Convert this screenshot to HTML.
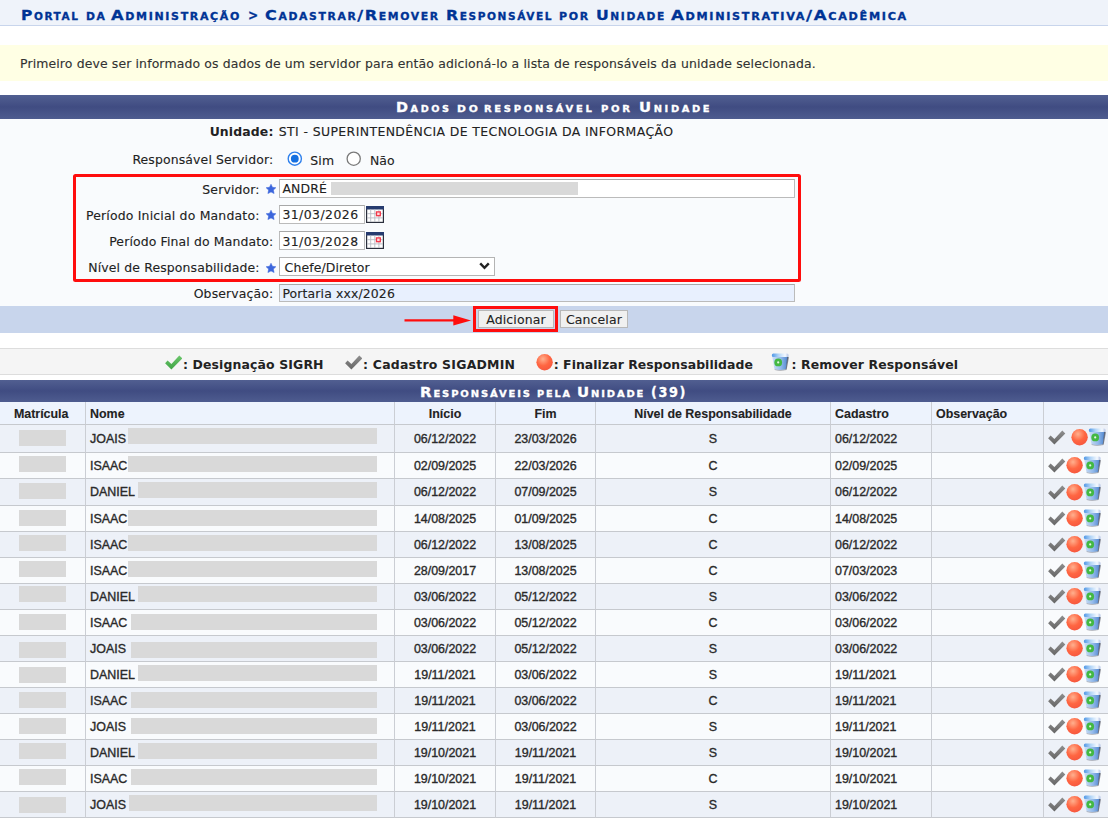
<!DOCTYPE html>
<html lang="pt-BR">
<head>
<meta charset="utf-8">
<title>Cadastrar/Remover Responsável por Unidade</title>
<style>
html,body{margin:0;padding:0;background:#fff;}
body{width:1108px;height:818px;position:relative;overflow:hidden;font-family:"DejaVu Sans","Liberation Sans",sans-serif;font-size:12.45px;letter-spacing:0.13px;color:#222;-webkit-text-stroke:0.12px #222;}
.abs{position:absolute;}
.a{font-family:"Liberation Sans",sans-serif;letter-spacing:0;}
#hdr{left:0;top:0;width:1108px;height:25px;background:#eff3fa;border-bottom:1px solid #c8d5ec;}
.w{position:absolute;white-space:nowrap;transform-origin:0 50%;font-weight:bold;font-variant:small-caps;}
.hw{top:5.8px;color:#003395;font-size:14.8px;letter-spacing:1.5px;line-height:18px;-webkit-text-stroke:0.3px #003395;}
.b1,.b2{color:#fff;font-size:13.5px;letter-spacing:2.4px;line-height:16px;-webkit-text-stroke:0.3px #fff;}
.b2{letter-spacing:1.7px;}
.b1{top:4.3px;}
.b2{top:3.6px;}
#msg{left:0;top:44.6px;width:1108px;height:36.9px;background:#ffffe4;}
#msg span{position:absolute;left:20px;top:11.9px;white-space:nowrap;color:#333;line-height:16px;}
.bar{left:0;width:1108px;background:linear-gradient(#515f91 0%,#404c82 50%,#4e5c8f 100%);}
#bar1{top:94.6px;height:24px;}
#bar2{top:380.4px;height:21.6px;}
#form{left:0;top:118.6px;width:1108px;height:188px;background:#f9fbfd;}
.lbl{position:absolute;white-space:nowrap;line-height:16px;color:#222;}
.r{text-align:right;}
.inp{position:absolute;box-sizing:border-box;border:1px solid #bbb;border-top-color:#a8a8a8;background:#fff;white-space:nowrap;overflow:hidden;color:#222;line-height:16px;padding:1.4px 0 0 2.8px;}
.star{position:absolute;width:10px;height:10px;margin:-0.5px 0 0 -0.5px;overflow:visible;}
.cal{position:absolute;width:18px;height:17px;}
#strip{left:0;top:306px;width:1108px;height:26.5px;background:#c8d5ec;}
.btn{position:absolute;box-sizing:border-box;border:1px solid #b8b8b8;background:#f0f0f0;padding-top:0.9px;text-align:center;color:#222;white-space:nowrap;line-height:16px;}
#legend{left:0;top:348px;width:1108px;height:26.5px;background:#f5f5f5;border-top:1px solid #ddd;border-bottom:1px solid #ddd;box-sizing:border-box;}
#legend span{-webkit-text-stroke:0;position:absolute;font-weight:bold;white-space:nowrap;color:#222;top:7.5px;line-height:16px;}
.red{position:absolute;box-sizing:border-box;border:3.5px solid #ff0d0d;}
#tb{left:0;top:402px;width:1108px;border-collapse:separate;border-spacing:0;table-layout:fixed;font-size:12.45px;color:#2a2a2a;-webkit-text-stroke:0.35px #2a2a2a;}
#tb th,#tb td{box-sizing:border-box;border-right:1px solid #cbced4;border-bottom:1px solid #c6c9ce;padding:0 0 0 4px;text-align:left;white-space:nowrap;position:relative;overflow:hidden;vertical-align:middle;}
#tb th{height:23px;background:#edf3fd;font-weight:bold;color:#222;-webkit-text-stroke:0.1px #222;padding-top:2.6px;}
#tb .c{text-align:center;padding:0;}
#tb th.c{padding:2.6px 0 0 0;}
#tb th:first-child{padding-right:2.6px;}
#tb .l{border-right:0;padding:0;}
#tb tr.o td{background:#edf1f8;}
#tb tr.e td{background:#f9fbfd;}
#tb i.m{display:inline-block;width:47px;height:16px;background:#d9d9d9;vertical-align:middle;position:relative;top:0px;left:-0.5px;}
#tb i.n{position:absolute;top:50%;height:16px;right:17px;background:#d9d9d9;}
.ic{overflow:visible;position:absolute;width:18px;height:18px;top:50%;margin-top:-9.3px;}
.ic.k{left:3px;}
.ic.b{left:22px;}
.ic.t{left:39px;}
tr.f .ic.b{left:26.5px;}
tr.f .ic.t{left:43.5px;}
tr.f .ic{margin-top:-11px;}
</style>
</head>
<body>
<svg width="0" height="0" style="position:absolute">
<defs>
<linearGradient id="gk" x1="0" y1="0" x2="0" y2="1"><stop offset="0" stop-color="#8e8e8e"/><stop offset="1" stop-color="#666"/></linearGradient>
<linearGradient id="gg" x1="0" y1="0" x2="0" y2="1"><stop offset="0" stop-color="#6cc66c"/><stop offset="1" stop-color="#3fa545"/></linearGradient>
<radialGradient id="gb" cx="0.4" cy="0.3" r="0.75"><stop offset="0" stop-color="#ffb08e"/><stop offset="0.55" stop-color="#ff6642"/><stop offset="1" stop-color="#f5563e"/></radialGradient>
<linearGradient id="gt" x1="0" y1="0" x2="1" y2="0"><stop offset="0" stop-color="#cfe0f6"/><stop offset="0.55" stop-color="#92b9ea"/><stop offset="1" stop-color="#4c84ce"/></linearGradient>
<linearGradient id="gr" x1="0" y1="0" x2="1" y2="0"><stop offset="0" stop-color="#4f97e6"/><stop offset="0.4" stop-color="#b0d4f7"/><stop offset="0.8" stop-color="#f4f9ff"/><stop offset="1" stop-color="#b4c2e4"/></linearGradient>
<symbol id="ck" viewBox="0 0 18 18" overflow="visible"><path d="M1.1 10.3 L3.6 7.6 L7.4 11 L15.3 2.6 L18.3 5.4 L7.4 16.4 Z" fill="url(#gk)"/></symbol>
<symbol id="ckg" viewBox="0 0 18 18" overflow="visible"><path d="M1.1 10.3 L3.6 7.6 L7.4 11 L15.3 2.6 L18.3 5.4 L7.4 16.4 Z" fill="url(#gg)"/></symbol>
<symbol id="ball" viewBox="0 0 18 18"><circle cx="8.6" cy="9.3" r="8.2" fill="url(#gb)"/></symbol>
<symbol id="trash" viewBox="0 0 18 18" overflow="visible"><path d="M1.1 3 L17.2 3 L15 16.3 Q9 17.9 3.5 16.3 Z" fill="url(#gt)"/><path d="M16.2 3.6 L17.9 4.2 L15.7 16.5 L14.7 16.8 Z" fill="#4a4f5c" opacity=".7"/><path d="M3.5 16.3 Q9 17.9 15 16.3 L15.5 17 Q9 18.6 3.8 17.1 Z" fill="#5d6270" opacity=".55"/><rect x="0.9" y="0.5" width="16.6" height="3.4" rx="1.5" fill="url(#gr)"/><circle cx="7.2" cy="9.4" r="3.9" fill="#43b843"/><circle cx="7.2" cy="9.4" r="1.1" fill="#e4f6e4"/></symbol>
<symbol id="star" viewBox="0 0 10 10"><path d="M5 0.2 L6.5 3.3 L9.9 3.7 L7.4 6.1 L8.1 9.6 L5 7.9 L1.9 9.6 L2.6 6.1 L0.1 3.7 L3.5 3.3 Z" fill="#3c66dc" stroke="#3c66dc" stroke-width="0.5" stroke-linejoin="round"/></symbol>
<symbol id="cal" viewBox="0 0 18 17"><rect x="0.6" y="0.6" width="16.8" height="15.8" fill="#fff" stroke="#2b2f3c" stroke-width="1.2"/><rect x="0" y="0" width="18" height="3.5" fill="#263b6f"/><path d="M4.7 3.5 V16 M8.8 3.5 V16 M12.9 3.5 V16 M1 7.7 H17 M1 11.9 H17" stroke="#b9bcc4" stroke-width="0.9" fill="none"/><rect x="10.5" y="5.9" width="3.8" height="3.8" fill="#ffd9dc" stroke="#f23648" stroke-width="1.3"/></symbol>
</defs>
</svg>
<div id="hdr" class="abs"><span class="w hw" id="hw0" style="left:21.3px;transform:scaleX(1.0485)">Portal</span> <span class="w hw" id="hw1" style="left:86.4px;transform:scaleX(1.0771)">da</span> <span class="w hw" id="hw2" style="left:111.4px;transform:scaleX(1.1016)">Administração</span> <span class="w hw" id="hw3" style="left:247.8px;transform:scaleX(0.8222)">&gt;</span> <span class="w hw" id="hw4" style="left:265.2px;transform:scaleX(1.0826)">Cadastrar/Remover</span> <span class="w hw" id="hw5" style="left:445.7px;transform:scaleX(1.0577)">Responsável</span> <span class="w hw" id="hw6" style="left:558.9px;transform:scaleX(1.0968)">por</span> <span class="w hw" id="hw7" style="left:595.5px;transform:scaleX(1.0625)">Unidade</span> <span class="w hw" id="hw8" style="left:671.3px;transform:scaleX(1.1208)">Administrativa/Acadêmica</span></div>
<div id="msg" class="abs"><span>Primeiro deve ser informado os dados de um servidor para então adicioná-lo a lista de responsáveis da unidade selecionada.</span></div>
<div id="bar1" class="abs bar"><span class="w b1" id="b10" style="left:396.1px;transform:scaleX(1.0733)">Dados</span> <span class="w b1" id="b11" style="left:456.7px;transform:scaleX(1.1871)">do</span> <span class="w b1" id="b12" style="left:484.4px;transform:scaleX(1.1109)">responsável</span> <span class="w b1" id="b13" style="left:601.4px;transform:scaleX(1.1196)">por</span> <span class="w b1" id="b14" style="left:639.0px;transform:scaleX(1.0979)">Unidade</span></div>
<div id="form" class="abs"></div>
<!-- form rows (absolute in page coords) -->
<div class="lbl r" style="left:60px;width:213.5px;top:123.5px;font-weight:bold;-webkit-text-stroke:0">Unidade:</div>
<div class="lbl" style="left:278.7px;top:123.5px;letter-spacing:0.4px">STI - SUPERINTENDÊNCIA DE TECNOLOGIA DA INFORMAÇÃO</div>
<div class="lbl r" style="left:60px;width:213.3px;top:152.1px">Responsável Servidor:</div>
<svg class="abs" style="left:287px;top:151px" width="16" height="16" viewBox="0 0 16 16"><circle cx="7.8" cy="7.7" r="6.6" fill="#fff" stroke="#2f80ec" stroke-width="1.4"/><circle cx="7.8" cy="7.7" r="3.9" fill="#1670e0"/></svg>
<div class="lbl" style="left:310.3px;top:153.4px">Sim</div>
<svg class="abs" style="left:346px;top:151px" width="16" height="16" viewBox="0 0 16 16"><circle cx="7.7" cy="7.7" r="6.6" fill="#fff" stroke="#7a7a7a" stroke-width="1.3"/></svg>
<div class="lbl" style="left:369.9px;top:153.4px">Não</div>

<div class="red" style="left:72.8px;top:173.8px;width:728.1px;height:108.5px;border-width:3.6px;border-radius:2.5px"></div>

<div class="lbl r" style="left:60px;width:199.6px;top:181.6px">Servidor:</div>
<svg class="star" style="left:266px;top:184.5px"><use href="#star"/></svg>
<div class="inp" style="left:278.6px;top:179px;width:516.4px;height:18.5px">ANDRÉ<i style="position:absolute;left:51.5px;top:2px;width:247px;height:13px;background:#d9d9d9"></i></div>

<div class="lbl r" style="left:60px;width:199.6px;top:207.6px;letter-spacing:0.19px">Período Inicial do Mandato:</div>
<svg class="star" style="left:266px;top:210.5px"><use href="#star"/></svg>
<div class="inp" style="left:278.6px;top:205px;width:86px;height:18.5px;letter-spacing:0.45px">31/03/2026</div>
<svg class="cal" style="left:366px;top:206px"><use href="#cal"/></svg>

<div class="lbl r" style="left:60px;width:213.3px;top:233.8px">Período Final do Mandato:</div>
<div class="inp" style="left:278.6px;top:231.3px;width:86px;height:18.5px;letter-spacing:0.45px">31/03/2028</div>
<svg class="cal" style="left:366px;top:232px"><use href="#cal"/></svg>

<div class="lbl r" style="left:60px;width:199.6px;top:260px">Nível de Responsabilidade:</div>
<svg class="star" style="left:266px;top:263px"><use href="#star"/></svg>
<div class="inp" style="left:278.6px;top:257.3px;width:216.2px;height:18.8px;padding-left:5px;border-color:#b4b4b4">Chefe/Diretor<svg style="position:absolute;right:3.5px;top:4px" width="11" height="8" viewBox="0 0 11 8"><path d="M1.2 1.3 L5.5 5.8 L9.8 1.3" fill="none" stroke="#222" stroke-width="2.4"/></svg></div>

<div class="lbl r" style="left:60px;width:213.3px;top:285.8px">Observação:</div>
<div class="inp" style="left:278.6px;top:283.6px;width:516.4px;height:18.6px;background:#e8f0fe">Portaria xxx/2026</div>

<div id="strip" class="abs"></div>
<svg class="abs" style="left:400px;top:312px" width="75" height="17" viewBox="0 0 75 17"><path d="M4.5 8.4 H56" stroke="#ff0d0d" stroke-width="2.2" fill="none"/><path d="M53.3 3.2 L71 8.4 L53.3 13.6 Z" fill="#ff0d0d"/></svg>
<div class="red" style="left:473px;top:306.3px;width:84.8px;height:25.6px;border-width:3.3px"></div>
<div class="btn" style="left:478px;top:310.3px;width:76px;height:18px">Adicionar</div>
<div class="btn" style="left:560px;top:310.3px;width:68px;height:18px">Cancelar</div>

<div id="legend" class="abs">
<svg class="abs" style="left:163.8px;top:3.7px" width="18" height="18"><use href="#ckg"/></svg>
<span style="left:183px">: Designação SIGRH</span>
<svg class="abs" style="left:344px;top:3.7px" width="18" height="18"><use href="#ck"/></svg>
<span style="left:363px;letter-spacing:0.24px">: Cadastro SIGADMIN</span>
<svg class="abs" style="left:535.9px;top:3.8px" width="18" height="18"><use href="#ball"/></svg>
<span style="left:553.7px;letter-spacing:0.05px">: Finalizar Responsabilidade</span>
<svg class="abs" style="left:771.1px;top:4.2px" width="18" height="18"><use href="#trash"/></svg>
<span style="left:791.4px">: Remover Responsável</span>
</div>
<div id="bar2" class="abs bar"><span class="w b2" id="b20" style="left:420.4px;transform:scaleX(1.1078)">Responsáveis</span> <span class="w b2" id="b21" style="left:537.3px;transform:scaleX(1.0802)">pela</span> <span class="w b2" id="b22" style="left:577.2px;transform:scaleX(1.1046)">Unidade</span> <span class="w b2" id="b23" style="left:650.5px;transform:scaleX(0.9521)">(39)</span></div>

<table id="tb" class="abs a" cellspacing="0" cellpadding="0">
<colgroup><col style="width:86px"><col style="width:309px"><col style="width:101px"><col style="width:100px"><col style="width:235px"><col style="width:101px"><col style="width:112px"><col style="width:64px"></colgroup>
<tr class="th"><th class="c">Matrícula</th><th>Nome</th><th class="c">Início</th><th class="c">Fim</th><th class="c">Nível de Responsabilidade</th><th>Cadastro</th><th>Observação</th><th class="l"></th></tr>
<tr class="o f" style="height:28px"><td class="c"><i class="m" style="top:-0.6px"></i></td><td><span>JOAIS</span><i class="n" style="left:42.3px;margin-top:-10.2px"></i></td><td class="c">06/12/2022</td><td class="c">23/03/2026</td><td class="c">S</td><td>06/12/2022</td><td></td><td class="l"><svg class="ic k"><use href="#ck"/></svg><svg class="ic b"><use href="#ball"/></svg><svg class="ic t"><use href="#trash"/></svg></td></tr>
<tr class="e" style="height:26px"><td class="c"><i class="m" style="top:-1.7px"></i></td><td><span>ISAAC</span><i class="n" style="left:42.3px;margin-top:-9.7px"></i></td><td class="c">02/09/2025</td><td class="c">22/03/2026</td><td class="c">C</td><td>02/09/2025</td><td></td><td class="l"><svg class="ic k"><use href="#ck"/></svg><svg class="ic b"><use href="#ball"/></svg><svg class="ic t"><use href="#trash"/></svg></td></tr>
<tr class="o" style="height:27px"><td class="c"><i class="m" style="top:-0.6px"></i></td><td><span>DANIEL</span><i class="n" style="left:51.7px;margin-top:-10.4px"></i></td><td class="c">06/12/2022</td><td class="c">07/09/2025</td><td class="c">S</td><td>06/12/2022</td><td></td><td class="l"><svg class="ic k"><use href="#ck"/></svg><svg class="ic b"><use href="#ball"/></svg><svg class="ic t"><use href="#trash"/></svg></td></tr>
<tr class="e" style="height:26px"><td class="c"><i class="m" style="top:-1.0px"></i></td><td><span>ISAAC</span><i class="n" style="left:42.3px;margin-top:-9.0px"></i></td><td class="c">14/08/2025</td><td class="c">01/09/2025</td><td class="c">C</td><td>14/08/2025</td><td></td><td class="l"><svg class="ic k"><use href="#ck"/></svg><svg class="ic b"><use href="#ball"/></svg><svg class="ic t"><use href="#trash"/></svg></td></tr>
<tr class="o" style="height:26px"><td class="c"><i class="m" style="top:-1.4px"></i></td><td><span>ISAAC</span><i class="n" style="left:42.3px;margin-top:-9.3px"></i></td><td class="c">06/12/2022</td><td class="c">13/08/2025</td><td class="c">C</td><td>06/12/2022</td><td></td><td class="l"><svg class="ic k"><use href="#ck"/></svg><svg class="ic b"><use href="#ball"/></svg><svg class="ic t"><use href="#trash"/></svg></td></tr>
<tr class="e" style="height:26px"><td class="c"><i class="m" style="top:-1.7px"></i></td><td><span>ISAAC</span><i class="n" style="left:42.3px;margin-top:-9.7px"></i></td><td class="c">28/09/2017</td><td class="c">13/08/2025</td><td class="c">C</td><td>07/03/2023</td><td></td><td class="l"><svg class="ic k"><use href="#ck"/></svg><svg class="ic b"><use href="#ball"/></svg><svg class="ic t"><use href="#trash"/></svg></td></tr>
<tr class="o" style="height:26px"><td class="c"><i class="m" style="top:-2.4px"></i></td><td><span>DANIEL</span><i class="n" style="left:51.7px;margin-top:-10.4px"></i></td><td class="c">03/06/2022</td><td class="c">05/12/2022</td><td class="c">S</td><td>03/06/2022</td><td></td><td class="l"><svg class="ic k"><use href="#ck"/></svg><svg class="ic b"><use href="#ball"/></svg><svg class="ic t"><use href="#trash"/></svg></td></tr>
<tr class="e" style="height:26px"><td class="c"><i class="m" style="top:-0.9px"></i></td><td><span>ISAAC</span><i class="n" style="left:44.8px;margin-top:-8.9px"></i></td><td class="c">03/06/2022</td><td class="c">05/12/2022</td><td class="c">C</td><td>03/06/2022</td><td></td><td class="l"><svg class="ic k"><use href="#ck"/></svg><svg class="ic b"><use href="#ball"/></svg><svg class="ic t"><use href="#trash"/></svg></td></tr>
<tr class="o" style="height:26px"><td class="c"><i class="m" style="top:1.1px"></i></td><td><span>JOAIS</span><i class="n" style="left:44.8px;margin-top:-6.9px"></i></td><td class="c">03/06/2022</td><td class="c">05/12/2022</td><td class="c">S</td><td>03/06/2022</td><td></td><td class="l"><svg class="ic k"><use href="#ck"/></svg><svg class="ic b"><use href="#ball"/></svg><svg class="ic t"><use href="#trash"/></svg></td></tr>
<tr class="e" style="height:26px"><td class="c"><i class="m" style="top:-0.0px"></i></td><td><span>DANIEL</span><i class="n" style="left:51.7px;margin-top:-9.1px"></i></td><td class="c">19/11/2021</td><td class="c">03/06/2022</td><td class="c">S</td><td>19/11/2021</td><td></td><td class="l"><svg class="ic k"><use href="#ck"/></svg><svg class="ic b"><use href="#ball"/></svg><svg class="ic t"><use href="#trash"/></svg></td></tr>
<tr class="o" style="height:26px"><td class="c"><i class="m" style="top:-0.2px"></i></td><td><span>ISAAC</span><i class="n" style="left:44.8px;margin-top:-8.2px"></i></td><td class="c">19/11/2021</td><td class="c">03/06/2022</td><td class="c">C</td><td>19/11/2021</td><td></td><td class="l"><svg class="ic k"><use href="#ck"/></svg><svg class="ic b"><use href="#ball"/></svg><svg class="ic t"><use href="#trash"/></svg></td></tr>
<tr class="e" style="height:26px"><td class="c"><i class="m" style="top:-0.7px"></i></td><td><span>JOAIS</span><i class="n" style="left:44.8px;margin-top:-8.7px"></i></td><td class="c">19/11/2021</td><td class="c">03/06/2022</td><td class="c">S</td><td>19/11/2021</td><td></td><td class="l"><svg class="ic k"><use href="#ck"/></svg><svg class="ic b"><use href="#ball"/></svg><svg class="ic t"><use href="#trash"/></svg></td></tr>
<tr class="o" style="height:26px"><td class="c"><i class="m" style="top:-1.1px"></i></td><td><span>DANIEL</span><i class="n" style="left:51.7px;margin-top:-9.1px"></i></td><td class="c">19/10/2021</td><td class="c">19/11/2021</td><td class="c">S</td><td>19/10/2021</td><td></td><td class="l"><svg class="ic k"><use href="#ck"/></svg><svg class="ic b"><use href="#ball"/></svg><svg class="ic t"><use href="#trash"/></svg></td></tr>
<tr class="e" style="height:26px"><td class="c"><i class="m" style="top:-1.4px"></i></td><td><span>ISAAC</span><i class="n" style="left:44.8px;margin-top:-9.4px"></i></td><td class="c">19/10/2021</td><td class="c">19/11/2021</td><td class="c">C</td><td>19/10/2021</td><td></td><td class="l"><svg class="ic k"><use href="#ck"/></svg><svg class="ic b"><use href="#ball"/></svg><svg class="ic t"><use href="#trash"/></svg></td></tr>
<tr class="o" style="height:26px"><td class="c"><i class="m" style="top:0.8px"></i></td><td><span>JOAIS</span><i class="n" style="left:43.1px;margin-top:-9.7px"></i></td><td class="c">19/10/2021</td><td class="c">19/11/2021</td><td class="c">S</td><td>19/10/2021</td><td></td><td class="l"><svg class="ic k"><use href="#ck"/></svg><svg class="ic b"><use href="#ball"/></svg><svg class="ic t"><use href="#trash"/></svg></td></tr>
</table>
</body>
</html>
